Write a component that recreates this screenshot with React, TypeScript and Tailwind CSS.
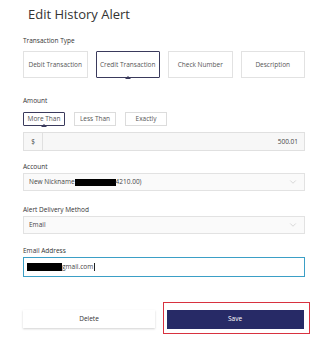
import { ChevronDown } from "lucide-react";

const types = ["Debit Transaction", "Credit Transaction", "Check Number", "Description"];
const amounts = ["More Than", "Less Than", "Exactly"];

function Caret() {
  return (
    <span className="absolute bottom-[-2px] left-1/2 h-0 w-0 -translate-x-1/2 border-x-[3px] border-b-[3px] border-x-transparent border-b-[#3a3a5c]" />
  );
}

function Label({ children }: { children: React.ReactNode }) {
  return <div className="text-[6.5px] leading-[9px] text-[#333]">{children}</div>;
}

export default function App() {
  return (
    <div className="h-[337px] w-[320px] overflow-hidden bg-white font-['Open_Sans',sans-serif] text-[#444]">
      <h1 className="pl-[28px] pt-[5px] text-[13px] leading-[18px] text-[#333]">Edit History Alert</h1>

      <div className="pl-[23px] pr-[15px]">
        <div className="mt-[13px]">
          <Label>Transaction Type</Label>
        </div>
        <div className="mt-[6px] grid grid-cols-4 gap-[8px]">
          {types.map((t, i) => (
            <div
              key={t}
              className={
                "relative flex h-[27px] items-center justify-center text-[6.5px] text-[#555] " +
                (i === 1 ? "border border-[#3a3a5c] rounded-[1px]" : "border border-[#e2e2e2]")
              }
            >
              {t}
              {i === 1 && <Caret />}
            </div>
          ))}
        </div>

        <div className="mt-[18px]">
          <Label>Amount</Label>
        </div>
        <div className="mt-[7px] flex gap-[9px]">
          {amounts.map((a, i) => (
            <div
              key={a}
              className={
                "relative flex h-[14px] w-[42px] items-center justify-center text-[6.5px] text-[#555] " +
                (i === 0 ? "border border-[#3a3a5c] rounded-[1px]" : "border border-[#dcdcdc]")
              }
            >
              {a}
              {i === 0 && <Caret />}
            </div>
          ))}
        </div>
        <div className="mt-[6px] flex h-[19px] border border-[#e0e0e0] bg-[#f7f7f7]">
          <div className="flex w-[19px] items-center justify-center border-r border-[#e0e0e0] text-[6.5px] text-[#444]">
            $
          </div>
          <div className="flex flex-1 items-center justify-end pr-[6px] text-[6.5px] text-[#444]">500.01</div>
        </div>

        <div className="mt-[11px]">
          <Label>Account</Label>
        </div>
        <div className="mt-[2px] flex h-[18px] items-center border border-[#e2e2e2] bg-[#fafafa] pl-[5px] pr-[5px] text-[6.5px] text-[#444]">
          <span>New Nickname</span>
          <span className="h-[7px] w-[41px] bg-black" />
          <span>4210.00)</span>
          <ChevronDown className="ml-auto h-[10px] w-[12px] text-[#bbb]" strokeWidth={1.3} />
        </div>

        <div className="mt-[14px]">
          <Label>Alert Delivery Method</Label>
        </div>
        <div className="mt-[2px] flex h-[18px] items-center border border-[#e2e2e2] bg-[#fafafa] pl-[5px] pr-[5px] text-[6.5px] text-[#444]">
          <span>Email</span>
          <ChevronDown className="ml-auto h-[10px] w-[12px] text-[#bbb]" strokeWidth={1.3} />
        </div>

        <div className="mt-[12px]">
          <Label>Email Address</Label>
        </div>
        <div className="mt-[2px] flex h-[20px] items-center border-[1.5px] border-[#3b9fc6] pl-[3px] text-[6.5px] text-[#444]">
          <span className="h-[8px] w-[35px] bg-black" />
          <span>gmail.com</span>
          <span className="ml-[1px] h-[8px] w-[0.8px] bg-[#222]" />
        </div>

        <div className="mt-[25px] flex items-center gap-[8px]">
          <div className="mt-[2px] flex h-[18px] w-[132px] items-center justify-center bg-white text-[6.5px] text-[#333] shadow-[0_1px_2px_rgba(0,0,0,0.18)]">
            Delete
          </div>
          <div className="mr-[-6px] border-[1.5px] border-[#d8323f] pb-[4.5px] pl-[2.5px] pr-[5.5px] pt-[6.5px]">
            <div className="flex h-[19px] w-[137px] items-center justify-center bg-[#272a66] text-[6.5px] text-white">
              Save
            </div>
          </div>
        </div>
      </div>
    </div>
  );
}
